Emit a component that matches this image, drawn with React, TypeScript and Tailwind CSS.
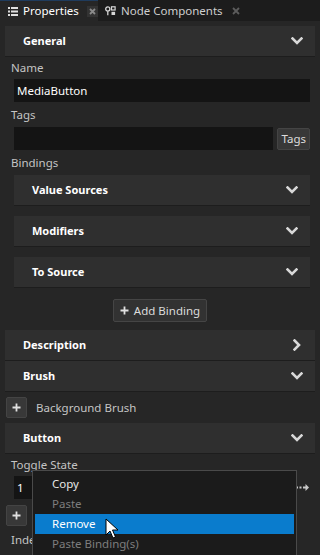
import React from "react";

function ChevronDown() {
  return (
    <svg width="12" height="8" viewBox="0 0 12 8" className="shrink-0">
      <polyline points="1.5,1.5 6,6 10.5,1.5" fill="none" stroke="#d8d8d8" strokeWidth="2.6" strokeLinecap="square" />
    </svg>
  );
}

function ChevronRight() {
  return (
    <svg width="8" height="12" viewBox="0 0 8 12" className="shrink-0 mr-[2px]">
      <polyline points="1.5,1.5 6,6 1.5,10.5" fill="none" stroke="#d8d8d8" strokeWidth="2.6" strokeLinecap="square" />
    </svg>
  );
}

function PlusIcon() {
  return (
    <svg width="9" height="9" viewBox="0 0 9 9">
      <path d="M4.5 0.5v8M0.5 4.5h8" stroke="#e0e0e0" strokeWidth="1.8" />
    </svg>
  );
}

function Section({ title, open = true }: { title: string; open?: boolean }) {
  return (
    <div className="flex items-center h-[31px] bg-[#2f2f2f] border-b border-[#1d1d1d] pl-[18px] pr-[12px]">
      <span className="flex-1 text-[11px] font-bold text-white">{title}</span>
      {open ? <ChevronDown /> : <ChevronRight />}
    </div>
  );
}

function Label({ children, h }: { children: React.ReactNode; h: string }) {
  return <div className={`${h} flex items-center pl-[6px] text-[11.5px] text-[#c4c4c4]`}>{children}</div>;
}

const menuItems = [
  { label: "Copy", disabled: false, active: false },
  { label: "Paste", disabled: true, active: false },
  { label: "Remove", disabled: false, active: true },
  { label: "Paste Binding(s)", disabled: true, active: false },
];

export default function App() {
  return (
    <div
      className="relative w-[320px] h-[555px] overflow-hidden bg-[#262626] select-none"
      style={{ fontFamily: '"Noto Sans", "Open Sans", sans-serif' }}
    >
      {/* tab bar */}
      <div className="flex h-[21px] bg-[#1c1c1c]">
        <div className="flex items-center w-[98px] bg-[#262626] border-t border-[#1f3b5c] pl-[8px]">
          <svg width="10" height="9" viewBox="0 0 10 9" className="mr-[5px]">
            <rect x="0" y="0" width="2" height="2" fill="#e0e0e0" />
            <rect x="3" y="0" width="7" height="2" fill="#e0e0e0" />
            <rect x="0" y="3.5" width="2" height="2" fill="#e0e0e0" />
            <rect x="3" y="3.5" width="7" height="2" fill="#e0e0e0" />
            <rect x="0" y="7" width="2" height="2" fill="#e0e0e0" />
            <rect x="3" y="7" width="7" height="2" fill="#e0e0e0" />
          </svg>
          <span className="text-[11.5px] text-white">Properties</span>
          <span className="ml-[8px] flex items-center justify-center w-[11px] h-[11px] bg-[#333333]">
            <svg width="7" height="7" viewBox="0 0 7 7">
              <path d="M1 1l5 5M6 1l-5 5" stroke="#8a8a8a" strokeWidth="1.8" />
            </svg>
          </span>
        </div>
        <div className="flex items-center pl-[7px]">
          <svg width="11" height="10" viewBox="0 0 11 10" className="mr-[5px]">
            <circle cx="2.8" cy="3" r="2.1" fill="none" stroke="#d8d8d8" strokeWidth="1.3" />
            <path d="M2.8 5.2v4" stroke="#d8d8d8" strokeWidth="1.3" />
            <rect x="6.5" y="0.8" width="3.6" height="3.2" fill="none" stroke="#d8d8d8" strokeWidth="1.2" />
            <rect x="6.5" y="5.8" width="3.6" height="3.2" fill="#d8d8d8" />
          </svg>
          <span className="text-[11.5px] text-[#cfcfcf]">Node Components</span>
          <svg width="8" height="8" viewBox="0 0 8 8" className="ml-[9px]">
            <path d="M1 1l6 6M7 1l-6 6" stroke="#5c5c5c" strokeWidth="1.8" />
          </svg>
        </div>
      </div>

      <div className="pt-[5px] px-[5px]">
        <Section title="General" />
        <Label h="h-[22px]">Name</Label>
        <div className="ml-[9px] mr-[5px] h-[23px] bg-[#141414] flex items-center pl-[3px] text-[11.5px] text-white">
          MediaButton
        </div>
        <Label h="h-[25px]">Tags</Label>
        <div className="flex items-center ml-[9px] mr-[5px] h-[23px] gap-[4px]">
          <div className="flex-1 h-[23px] bg-[#141414]" />
          <div className="h-[22px] px-[3px] flex items-center rounded-[2px] bg-[#383838] border border-[#444] text-[11.5px] text-[#dcdcdc]">
            Tags
          </div>
        </div>
        <Label h="h-[25px]">Bindings</Label>
        <div className="ml-[9px] mr-[5px] flex flex-col gap-[10px]">
          <Section title="Value Sources" />
          <Section title="Modifiers" />
          <Section title="To Source" />
        </div>
        <div className="flex justify-center pt-[11px] pb-[8px]">
          <div className="h-[23px] w-[94px] flex items-center justify-center gap-[5px] rounded-[2px] bg-[#323232] border border-[#454545] text-[11.5px] text-[#dcdcdc]">
            <PlusIcon />
            <span>Add Binding</span>
          </div>
        </div>
        <Section title="Description" open={false} />
        <Section title="Brush" />
        <div className="h-[31px] flex items-center pl-[1px] gap-[9px]">
          <div className="w-[21px] h-[21px] flex items-center justify-center rounded-[2px] bg-[#383838] border border-[#444]">
            <PlusIcon />
          </div>
          <span className="text-[11.5px] text-[#c4c4c4]">Background Brush</span>
        </div>
        <Section title="Button" />
        <Label h="h-[22px]">Toggle State</Label>
        <div className="flex items-center ml-[9px] mr-[5px] gap-[5px]">
          <div className="flex-1 h-[23px] bg-[#141414] flex items-center pl-[3px] text-[11.5px] text-white">1</div>
          <svg width="14" height="9" viewBox="0 0 14 9">
            <rect x="0" y="3.5" width="2" height="2" fill="#c8c8c8" />
            <rect x="3.5" y="3.5" width="2" height="2" fill="#c8c8c8" />
            <path d="M7 4.5h4" stroke="#c8c8c8" strokeWidth="2" />
            <path d="M9.5 1l3.5 3.5-3.5 3.5z" fill="#c8c8c8" />
          </svg>
        </div>
        <div className="h-[32px] flex items-center pl-[1px]">
          <div className="w-[21px] h-[21px] flex items-center justify-center rounded-[2px] bg-[#383838] border border-[#444]">
            <PlusIcon />
          </div>
        </div>
        <Label h="h-[18px]">Index</Label>
      </div>

      {/* context menu */}
      <div className="absolute left-[32px] top-[470px] w-[265px] h-[100px] bg-[#1b1b1b] border border-[#4a4a4a] pt-[3px] px-[2px]">
        {menuItems.map((m) => (
          <div
            key={m.label}
            className={`h-[20px] flex items-center pl-[17px] text-[11.5px] ${
              m.active ? "bg-[#0a7ccd] text-white" : m.disabled ? "text-[#7e7e7e]" : "text-[#e6e6e6]"
            }`}
          >
            {m.label}
          </div>
        ))}
      </div>

      {/* mouse cursor */}
      <svg className="absolute left-[105px] top-[518px]" width="14" height="21" viewBox="0 0 14 21">
        <path d="M1 1v16l4-4 3 7 2.5-1-3-7h5.5z" fill="#ffffff" stroke="#000000" strokeWidth="1" strokeLinejoin="round" />
      </svg>
    </div>
  );
}
